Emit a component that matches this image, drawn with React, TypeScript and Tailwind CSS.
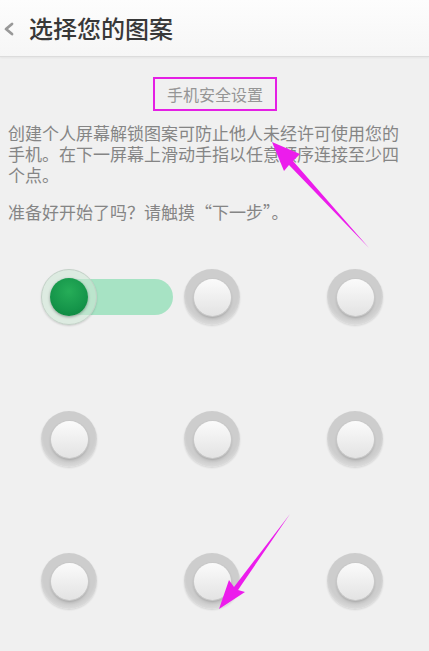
import React from 'react';

const font = { fontFamily: '"Noto Sans CJK SC", "Noto Sans", sans-serif' };

// plain grey pattern dot
function Dot() {
    return (
        <div className="w-[56px] h-[56px] rounded-full flex items-center justify-center bg-[radial-gradient(circle_at_50%_45%,#cdcdcd_62%,#dfdfdf_76%,#d2d2d2_100%)] shadow-[0_1px_2px_rgba(0,0,0,0.12)]">
            <div className="w-[37px] h-[37px] rounded-full bg-gradient-to-b from-[#fbfbfb] to-[#e3e3e3] shadow-[0_0_0_1px_#c8c8c8,0_2px_3px_rgba(0,0,0,0.22)]" />
        </div>
    );
}

// first dot, already touched
function ActiveDot() {
    return (
        <div className="relative w-[56px] h-[56px]">
            <div className="absolute left-[28px] top-[10px] w-[104px] h-[36px] rounded-r-full bg-[#a7e3c4]" />
            <div className="absolute inset-0 rounded-full flex items-center justify-center bg-[rgba(205,232,214,0.55)] border border-[#c3d1c7] shadow-[0_1px_2px_rgba(0,0,0,0.15)]">
                <div className="w-[38px] h-[38px] rounded-full bg-[radial-gradient(circle_at_50%_35%,#26ad58_0%,#15954a_60%,#0c7f3b_100%)] shadow-[0_1px_3px_rgba(0,0,0,0.35)]" />
            </div>
        </div>
    );
}

export default function App() {
    return (
        <div className="relative w-[429px] h-[651px] overflow-hidden bg-[#f0f0f0]" style={font}>
            <div className="h-[57px] flex items-center bg-gradient-to-b from-[#fdfdfd] to-[#f6f6f6] border-b border-[#dcdcdc] shadow-[0_1px_2px_rgba(0,0,0,0.05)]">
                <svg width="16" height="16" viewBox="0 0 16 16" className="ml-[1px] mt-[2px]">
                    <polyline points="11,3 5,8 11,13" fill="none" stroke="#999999" strokeWidth="2.8" strokeLinecap="round" strokeLinejoin="round" />
                </svg>
                <span className="ml-[12px] text-[24px] font-medium text-[#383838] leading-none">选择您的图案</span>
            </div>

            <div className="flex justify-center mt-[20px]">
                <div className="ml-[1px] w-[124px] h-[34px] border-2 border-[#e41fe4] flex items-center justify-center text-[16px] text-[#959595]">
                    手机安全设置
                </div>
            </div>

            <div className="pl-[8px] pr-[20px] mt-[11px] text-[17px] leading-[21px] text-[#858585]">
                <p>创建个人屏幕解锁图案可防止他人未经许可使用您的手机。在下一屏幕上滑动手指以任意顺序连接至少四个点。</p>
                <p className="mt-[16px]">准备好开始了吗？请触摸“下一步”。</p>
            </div>

            <div className="mt-[47px] pl-[41px] flex flex-col gap-[86px]">
                <div className="flex gap-[87px]">
                    <ActiveDot />
                    <Dot />
                    <Dot />
                </div>
                <div className="flex gap-[87px]">
                    <Dot />
                    <Dot />
                    <Dot />
                </div>
                <div className="flex gap-[87px]">
                    <Dot />
                    <Dot />
                    <Dot />
                </div>
            </div>

            {/* annotation arrows */}
            <svg className="absolute inset-0 pointer-events-none" width="429" height="651" viewBox="0 0 429 651">
                <polygon points="272,142 300,154 293,161 369,248 289,165 284,171" fill="#ec1cec" />
                <polygon points="219,609 229,580 234,587 290,514 238,590 245,592" fill="#ec1cec" />
            </svg>
        </div>
    );
}
